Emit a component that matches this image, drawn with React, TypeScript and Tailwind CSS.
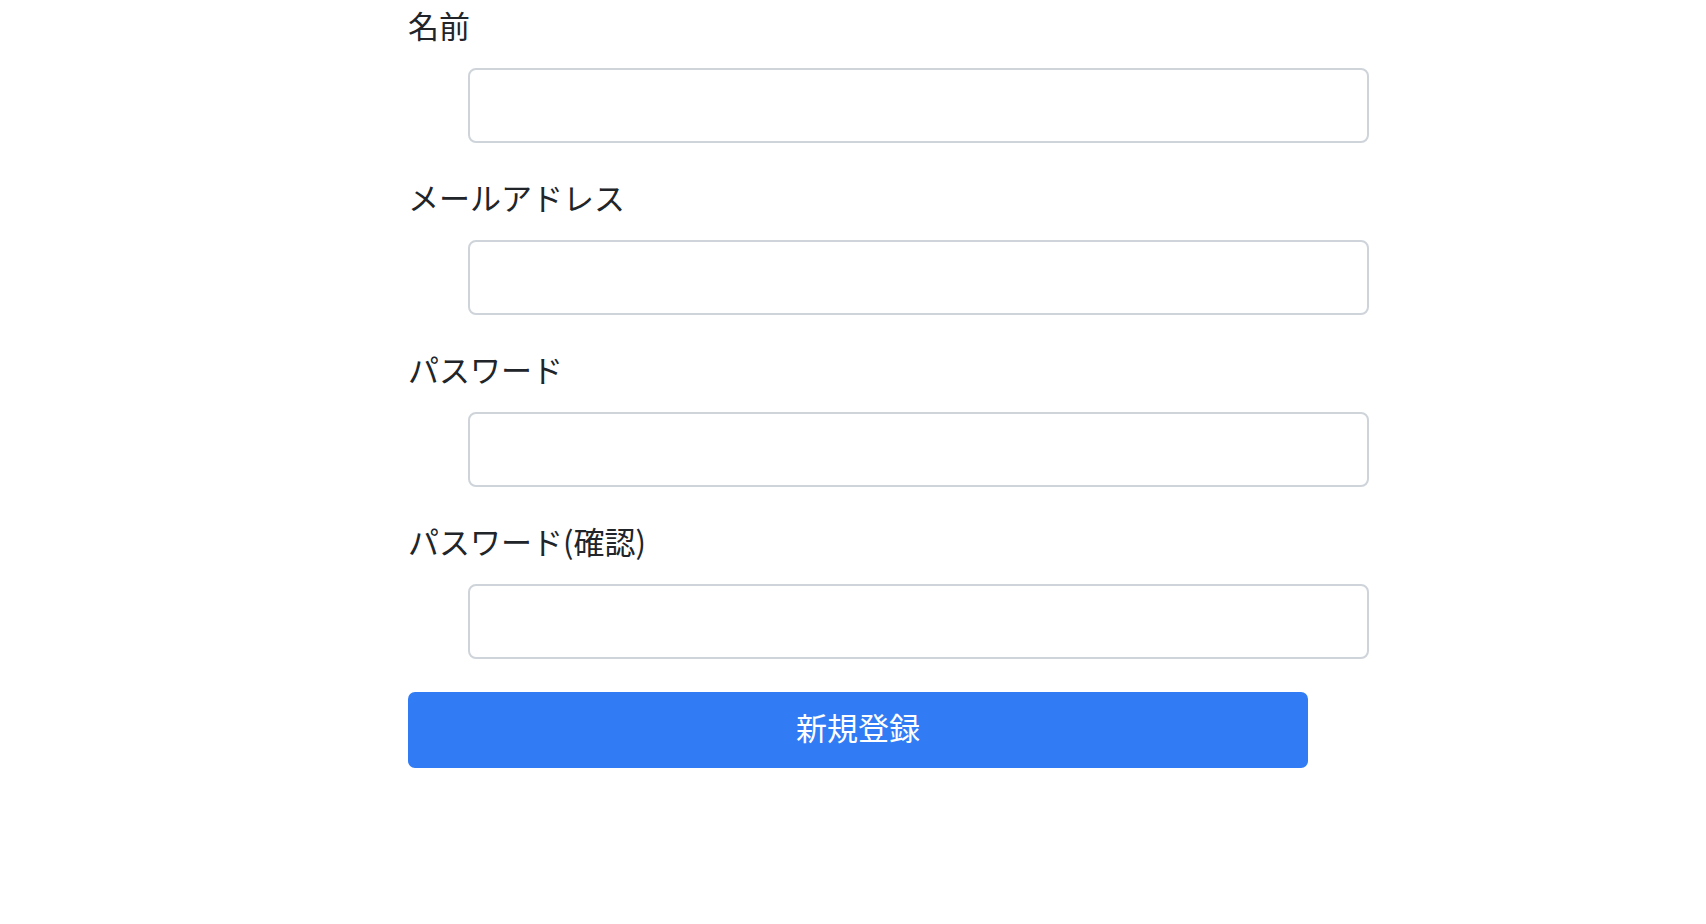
import React from "react";

const fields = ["名前", "メールアドレス", "パスワード", "パスワード(確認)"];

export default function App() {
  return (
    <div
      className="min-h-[924px] w-full bg-white text-[#212529]"
      style={{ fontFamily: '"Noto Sans CJK JP", "Noto Sans", sans-serif' }}
    >
      <div className="ml-[408px] flex w-[962px] flex-col">
        {fields.map((f) => (
          <div key={f} className="mb-[29px] flex flex-col">
            <label className="block h-[54px] text-[31px] leading-[50px]">{f}</label>
            <input
              type={f.startsWith("パスワード") ? "password" : "text"}
              className="mt-[14px] ml-[60px] h-[75px] w-[901px] rounded-[8px] border-2 border-[#ced4da] bg-white px-4 text-[31px] outline-none"
            />
          </div>
        ))}
        <button className="mt-[4px] h-[76px] w-[900px] rounded-[7px] bg-[#317cf5] pb-[5px] text-[31px] text-white">
          新規登録
        </button>
      </div>
    </div>
  );
}
